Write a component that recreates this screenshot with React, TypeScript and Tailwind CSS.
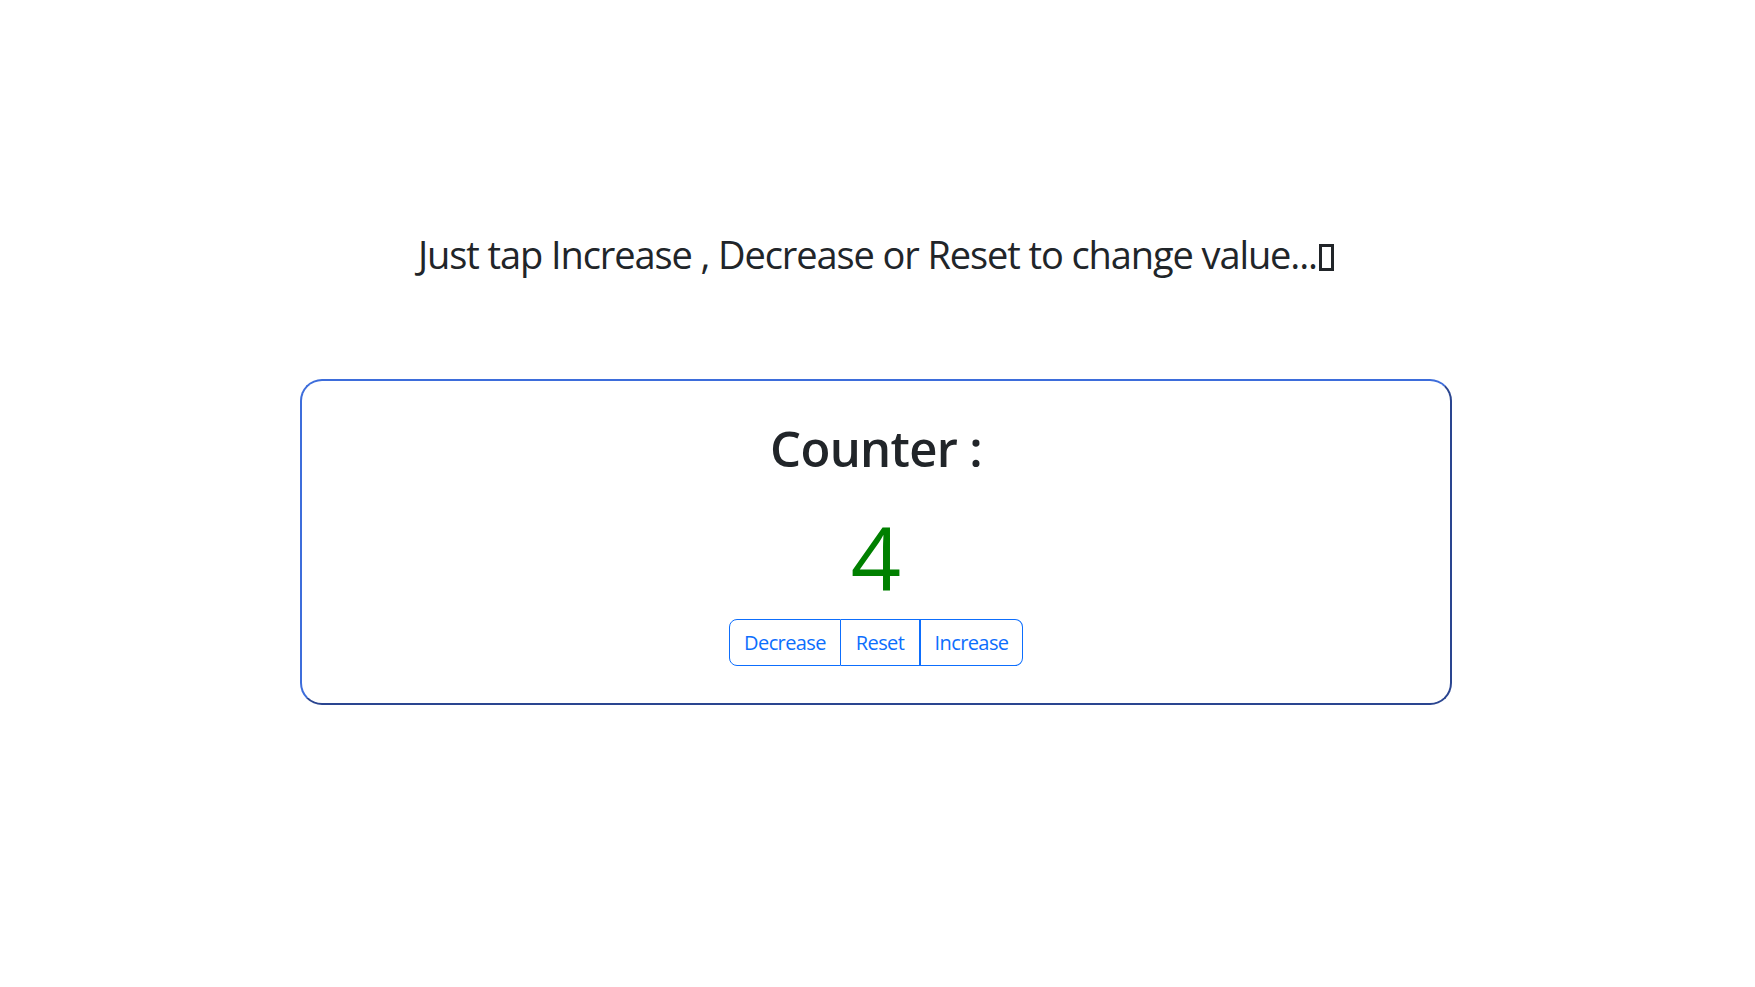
import React, { useState } from 'react';

export default function App() {
  const [count, setCount] = useState(4);

  return (
    <div className="min-h-screen bg-white text-[#212529] font-['Open_Sans',_'Noto_Sans',_sans-serif] pr-[3px]">
      <h1 className="pt-[231px] text-center text-[38px] leading-[46px] font-normal tracking-[-1.1px]">
        Just tap Increase , Decrease or Reset to change value...
        <span className="inline-block w-[15px] h-[27px] ml-[2px] align-[-2px] border-[3px] border-[#212529]"></span>
      </h1>

      <div className="mx-auto mt-[102px] w-[1152px] h-[326px] rounded-[22px] border-2 border-t-[#3d6ddb] border-l-[#3d6ddb] border-r-[#2a4590] border-b-[#2a4590] flex flex-col items-center">
        <h2 className="mt-[38px] text-[49px] leading-[58px] font-semibold tracking-[-0.7px]">Counter :</h2>
        <div className="mt-[30px] text-[88px] leading-[100px] text-[#008000]">{count}</div>
        <div className="mt-[12px] flex text-[20px] leading-[30px] text-[#0d6efd] tracking-[-0.6px]">
          <button
            onClick={() => setCount(count - 1)}
            className="h-[47px] w-[112px] border border-[#0d6efd] rounded-l-[8px]"
          >
            Decrease
          </button>
          <button
            onClick={() => setCount(0)}
            className="h-[47px] w-[78px] border-y border-[#0d6efd]"
          >
            Reset
          </button>
          <button
            onClick={() => setCount(count + 1)}
            className="h-[47px] w-[104px] border border-l-2 border-[#0d6efd] rounded-r-[8px]"
          >
            Increase
          </button>
        </div>
      </div>
    </div>
  );
}
